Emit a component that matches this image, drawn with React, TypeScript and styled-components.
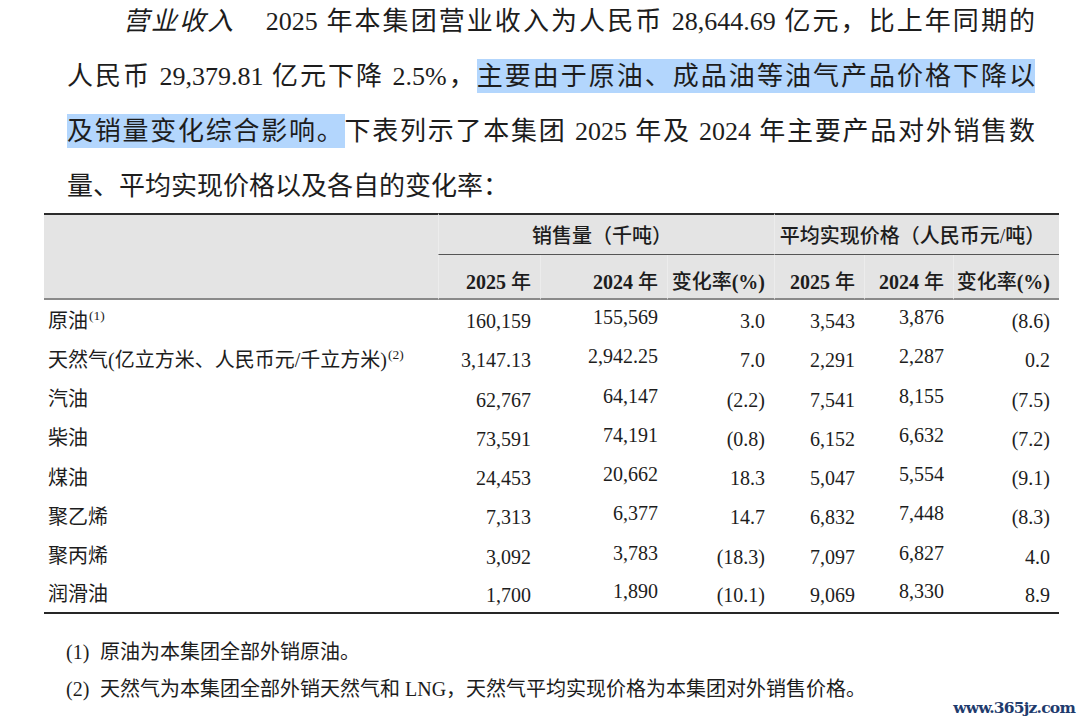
import React from 'react';
import styled, { createGlobalStyle } from 'styled-components';

const Global = createGlobalStyle`
  html, body { margin: 0; padding: 0; background: #ffffff; }
  body {
    width: 1080px;
    height: 720px;
    overflow: hidden;
    font-family: "Liberation Serif", "Noto Sans CJK SC", serif;
    color: #1d1d1d;
  }
`;

const Page = styled.div`
  position: relative;
  width: 1080px;
  height: 720px;
  display: flex;
  flex-direction: column;
  align-items: flex-start;
`;

const Para = styled.div`
  margin: -6px 0 0 67px;
  width: 968px;
  font-size: 26px;
  line-height: 55px;
`;

const Line = styled.div<{ $last?: boolean; $indent?: boolean }>`
  text-align: justify;
  text-align-last: ${(p) => (p.$last ? 'left' : 'justify')};
  text-indent: ${(p) => (p.$indent ? '56px' : '0')};
`;

const Topic = styled.span`
  font-style: italic;
  margin-right: 22px;
`;

const Mark = styled.span`
  background: #b3d6fd;
  padding: 3px 0 2px;
`;

const Table = styled.table`
  margin: -1px 0 0 44px;
  width: 1015px;
  border-collapse: separate;
  border-spacing: 0;
  table-layout: fixed;
  font-size: 20px;
  line-height: 24px;

  tbody tr:last-child td {
    border-bottom: 2px solid #262626;
  }
`;

const HeadCell = styled.th<{ $row: 1 | 2; $group?: boolean; $corner?: boolean }>`
  background: #e4e4e4;
  padding: 0 9px 0 0;
  font-weight: 500;
  white-space: nowrap;
  text-align: ${(p) => (p.$group ? 'center' : 'right')};
  vertical-align: ${(p) => (p.$row === 1 ? 'middle' : 'bottom')};
  border-top: ${(p) => (p.$row === 1 ? '2px solid #2c2c2c' : 'none')};
  border-bottom: ${(p) =>
    p.$group ? '1px solid #555555' : p.$row === 2 || p.$corner ? '2px solid #8a8a8a' : 'none'};
  border-left: ${(p) => (p.$corner ? 'none' : '1px solid #ececec')};
  height: ${(p) => (p.$row === 1 ? '36px' : '39px')};
  padding-bottom: ${(p) => (p.$row === 2 ? '4px' : '0')};
  padding-top: ${(p) => (p.$row === 1 ? '3px' : '0')};
`;

const Year = styled.span`
  font-weight: 700;
`;

const Row = styled.tr`
  height: 39.25px;
`;

const Label = styled.td`
  text-align: left;
  padding: 2px 0 0 4px;
  white-space: nowrap;
  vertical-align: middle;
`;

const Cell = styled.td<{ $raised?: boolean }>`
  text-align: right;
  padding: ${(p) => (p.$raised ? '0 9px 5px 0' : '3px 9px 0 0')};
  white-space: nowrap;
  vertical-align: middle;
`;

const Sup = styled.sup`
  font-size: 13.5px;
  line-height: 0;
  vertical-align: 8px;
  margin-left: 1px;
`;

const Notes = styled.div`
  margin: 20px 0 0 66px;
  font-size: 20px;
  line-height: 37px;
`;

const NoteLine = styled.div`
  display: flex;
`;

const NoteNum = styled.span`
  flex: none;
  width: 34px;
`;

const Watermark = styled.div`
  position: absolute;
  right: 5px;
  bottom: 3px;
  font-family: "DejaVu Serif", serif;
  font-size: 15.5px;
  font-weight: 700;
  letter-spacing: -0.8px;
  color: #1f3b6d;
`;

type RowData = { label: string; note?: string; vals: string[] };

const rows: RowData[] = [
  { label: '原油', note: '(1)', vals: ['160,159', '155,569', '3.0', '3,543', '3,876', '(8.6)'] },
  {
    label: '天然气(亿立方米、人民币元/千立方米)',
    note: '(2)',
    vals: ['3,147.13', '2,942.25', '7.0', '2,291', '2,287', '0.2'],
  },
  { label: '汽油', vals: ['62,767', '64,147', '(2.2)', '7,541', '8,155', '(7.5)'] },
  { label: '柴油', vals: ['73,591', '74,191', '(0.8)', '6,152', '6,632', '(7.2)'] },
  { label: '煤油', vals: ['24,453', '20,662', '18.3', '5,047', '5,554', '(9.1)'] },
  { label: '聚乙烯', vals: ['7,313', '6,377', '14.7', '6,832', '7,448', '(8.3)'] },
  { label: '聚丙烯', vals: ['3,092', '3,783', '(18.3)', '7,097', '6,827', '4.0'] },
  { label: '润滑油', vals: ['1,700', '1,890', '(10.1)', '9,069', '8,330', '8.9'] },
];

const widths = [394, 102, 127, 107, 90, 89, 106];
const raisedCols = [1, 4];

export default function App() {
  return (
    <Page>
      <Global />
      <Para>
        <Line $indent>
          <Topic>营业收入</Topic> 2025 年本集团营业收入为人民币 28,644.69 亿元，比上年同期的
        </Line>
        <Line>
          人民币 29,379.81 亿元下降 2.5%，<Mark>主要由于原油、成品油等油气产品价格下降以</Mark>
        </Line>
        <Line>
          <Mark>及销量变化综合影响。</Mark>下表列示了本集团 2025 年及 2024 年主要产品对外销售数
        </Line>
        <Line $last>量、平均实现价格以及各自的变化率：</Line>
      </Para>

      <Table>
        <colgroup>
          {widths.map((w, i) => (
            <col key={i} style={{ width: w }} />
          ))}
        </colgroup>
        <thead>
          <tr>
            <HeadCell $row={1} $corner rowSpan={2} />
            <HeadCell $row={1} $group colSpan={3}>
              销售量（千吨）
            </HeadCell>
            <HeadCell $row={1} $group colSpan={3}>
              平均实现价格（人民币元/吨）
            </HeadCell>
          </tr>
          <tr>
            <HeadCell $row={2}>
              <Year>2025</Year> 年
            </HeadCell>
            <HeadCell $row={2}>
              <Year>2024</Year> 年
            </HeadCell>
            <HeadCell $row={2}>
              变化率<Year>(%)</Year>
            </HeadCell>
            <HeadCell $row={2}>
              <Year>2025</Year> 年
            </HeadCell>
            <HeadCell $row={2}>
              <Year>2024</Year> 年
            </HeadCell>
            <HeadCell $row={2}>
              变化率<Year>(%)</Year>
            </HeadCell>
          </tr>
        </thead>
        <tbody>
          {rows.map((r) => (
            <Row key={r.label}>
              <Label>
                {r.label}
                {r.note && <Sup>{r.note}</Sup>}
              </Label>
              {r.vals.map((v, i) => (
                <Cell key={i} $raised={raisedCols.includes(i)}>
                  {v}
                </Cell>
              ))}
            </Row>
          ))}
        </tbody>
      </Table>

      <Notes>
        <NoteLine>
          <NoteNum>(1)</NoteNum>
          <span>原油为本集团全部外销原油。</span>
        </NoteLine>
        <NoteLine>
          <NoteNum>(2)</NoteNum>
          <span>天然气为本集团全部外销天然气和 LNG，天然气平均实现价格为本集团对外销售价格。</span>
        </NoteLine>
      </Notes>

      <Watermark>www.365jz.com</Watermark>
    </Page>
  );
}
